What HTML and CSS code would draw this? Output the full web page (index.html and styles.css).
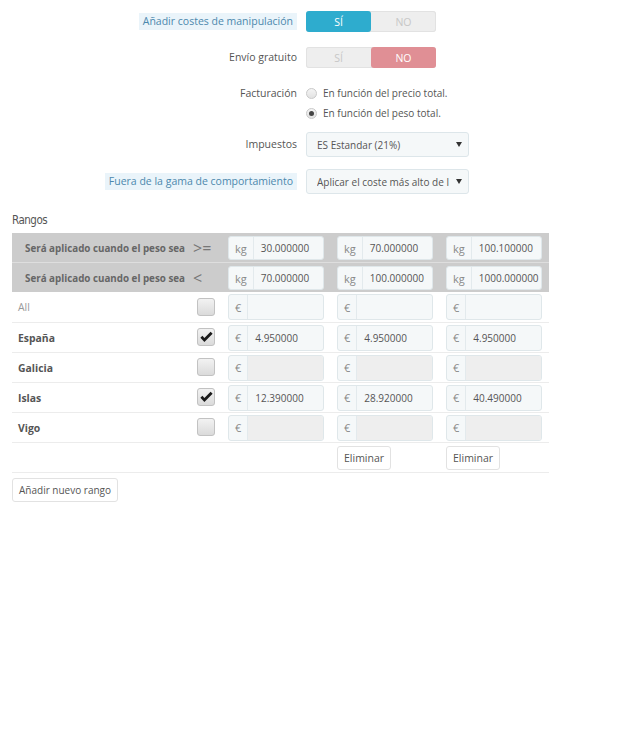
FILE: index.html
```html
<!DOCTYPE html>
<html lang="es">
<head>
<meta charset="utf-8">
<title>Rangos</title>
<link rel="stylesheet" href="styles.css">
</head>
<body>
<div class="form">
  <div class="row row-t1">
    <div class="lbl"><span class="tip">Añadir costes de manipulación</span></div>
    <div class="switch"><span class="opt yes-on">SÍ</span><span class="opt">NO</span></div>
  </div>
  <div class="row row-t2">
    <div class="lbl">Envío gratuito</div>
    <div class="switch"><span class="opt">SÍ</span><span class="opt no-on">NO</span></div>
  </div>
  <div class="row row-radio">
    <div class="lbl lbl-top">Facturación</div>
    <div class="radios">
      <label class="radio"><span class="dot"></span>En función del precio total.</label>
      <label class="radio"><span class="dot checked"></span>En función del peso total.</label>
    </div>
  </div>
  <div class="row row-s1">
    <div class="lbl">Impuestos</div>
    <div class="select"><span class="sel-text">ES Estandar (21%)</span><span class="caret"></span></div>
  </div>
  <div class="row row-s2">
    <div class="lbl"><span class="tip">Fuera de la gama de comportamiento</span></div>
    <div class="select"><span class="sel-text">Aplicar el coste más alto de la gama definida</span><span class="caret"></span></div>
  </div>
</div>

<h4 class="heading">Rangos</h4>

<table class="ranges">
  <colgroup>
    <col class="c-name"><col class="c-sign"><col class="c-range"><col class="c-range"><col class="c-range">
  </colgroup>
  <thead>
    <tr class="head head-1">
      <th class="h-text">Será aplicado cuando el peso sea</th>
      <th class="h-sign">&gt;=</th>
      <td><div class="ig"><span class="add">kg</span><span class="val">30.000000</span></div></td>
      <td><div class="ig"><span class="add">kg</span><span class="val">70.000000</span></div></td>
      <td><div class="ig"><span class="add">kg</span><span class="val">100.100000</span></div></td>
    </tr>
    <tr class="head">
      <th class="h-text">Será aplicado cuando el peso sea</th>
      <th class="h-sign">&lt;</th>
      <td><div class="ig"><span class="add">kg</span><span class="val">70.000000</span></div></td>
      <td><div class="ig"><span class="add">kg</span><span class="val">100.000000</span></div></td>
      <td><div class="ig"><span class="add">kg</span><span class="val">1000.000000</span></div></td>
    </tr>
  </thead>
  <tbody>
    <tr>
      <td class="name all">All</td>
      <td class="chk"><span class="box"></span></td>
      <td><div class="ig ig-b"><span class="add">€</span><span class="val"></span></div></td>
      <td><div class="ig ig-b"><span class="add">€</span><span class="val"></span></div></td>
      <td><div class="ig ig-b"><span class="add">€</span><span class="val"></span></div></td>
    </tr>
    <tr>
      <td class="name">España</td>
      <td class="chk"><span class="box"><svg viewBox="0 0 17 17" width="17" height="17"><path d="M2.4 8.8 L6.4 13 L14.6 4.8 L12.6 2.8 L6.4 9 L4.4 6.8 Z" fill="#1a1a1a"/></svg></span></td>
      <td><div class="ig ig-b"><span class="add">€</span><span class="val">4.950000</span></div></td>
      <td><div class="ig ig-b"><span class="add">€</span><span class="val">4.950000</span></div></td>
      <td><div class="ig ig-b"><span class="add">€</span><span class="val">4.950000</span></div></td>
    </tr>
    <tr>
      <td class="name">Galicia</td>
      <td class="chk"><span class="box"></span></td>
      <td><div class="ig ig-b dis"><span class="add">€</span><span class="val"></span></div></td>
      <td><div class="ig ig-b dis"><span class="add">€</span><span class="val"></span></div></td>
      <td><div class="ig ig-b dis"><span class="add">€</span><span class="val"></span></div></td>
    </tr>
    <tr>
      <td class="name">Islas</td>
      <td class="chk"><span class="box"><svg viewBox="0 0 17 17" width="17" height="17"><path d="M2.4 8.8 L6.4 13 L14.6 4.8 L12.6 2.8 L6.4 9 L4.4 6.8 Z" fill="#1a1a1a"/></svg></span></td>
      <td><div class="ig ig-b"><span class="add">€</span><span class="val">12.390000</span></div></td>
      <td><div class="ig ig-b"><span class="add">€</span><span class="val">28.920000</span></div></td>
      <td><div class="ig ig-b"><span class="add">€</span><span class="val">40.490000</span></div></td>
    </tr>
    <tr>
      <td class="name">Vigo</td>
      <td class="chk"><span class="box"></span></td>
      <td><div class="ig ig-b dis"><span class="add">€</span><span class="val"></span></div></td>
      <td><div class="ig ig-b dis"><span class="add">€</span><span class="val"></span></div></td>
      <td><div class="ig ig-b dis"><span class="add">€</span><span class="val"></span></div></td>
    </tr>
    <tr class="actions">
      <td></td>
      <td></td>
      <td></td>
      <td><button class="btn">Eliminar</button></td>
      <td><button class="btn">Eliminar</button></td>
    </tr>
  </tbody>
</table>

<button class="btn btn-add">Añadir nuevo rango</button>
</body>
</html>
```

FILE: styles.css
```css
* { box-sizing: border-box; }

body {
  margin: 0;
  background: #fff;
  font-family: "Open Sans", "Liberation Sans", sans-serif;
  font-size: 10.5px;
  color: #555;
}

.form {
  display: flex;
  flex-direction: column;
  padding-top: 11px;
}

.row {
  display: grid;
  grid-template-columns: 297px auto;
  column-gap: 9px;
  align-items: center;
  justify-items: start;
}

.lbl {
  justify-self: end;
  text-align: right;
  color: #555;
  font-size: 10.5px;
  line-height: 17px;
}

.lbl-top { align-self: start; line-height: 20px; }

.tip {
  display: inline-block;
  background: #eaf4fa;
  color: #4c88ad;
  padding: 0 4px;
  line-height: 17px;
}

.row-t2 { margin-top: 15px; }
.row-radio { margin-top: 15px; }
.row-s1 { margin-top: 9px; }
.row-s2 { margin-top: 12px; }

.switch {
  display: flex;
  width: 130px;
  height: 21px;
  border-radius: 3px;
  background: #eee;
  box-shadow: inset 0 0 0 1px #e2e2e2;
}

.opt {
  flex: 1;
  display: flex;
  align-items: center;
  justify-content: center;
  color: #c7c7c7;
  font-size: 10.5px;
  text-transform: uppercase;
  border-radius: 3px;
}

.yes-on { background: #2eacce; color: #fff; }
.no-on { background: #e08f95; color: #fff; }

.radios { display: flex; flex-direction: column; }

.radio {
  display: flex;
  align-items: center;
  height: 20px;
  font-size: 10px;
  color: #555;
}

.dot {
  width: 11px;
  height: 11px;
  border-radius: 50%;
  border: 1px solid #c9c9c9;
  background: linear-gradient(#f4f4f4, #e2e2e2);
  margin-right: 6px;
  display: flex;
  align-items: center;
  justify-content: center;
}

.dot.checked::after {
  content: "";
  width: 5px;
  height: 5px;
  border-radius: 50%;
  background: #444;
}

.select {
  display: flex;
  align-items: center;
  width: 163px;
  height: 25px;
  background: #f5f8f9;
  border: 1px solid #dde6ea;
  border-radius: 3px;
  padding: 0 6px 0 10px;
}

.sel-text {
  flex: 1;
  overflow: hidden;
  white-space: nowrap;
  color: #555;
  font-size: 10px;
  margin-right: 7px;
}

.caret {
  width: 0;
  height: 0;
  border-left: 3px solid transparent;
  border-right: 3px solid transparent;
  border-top: 5px solid #333;
}

.heading {
  margin: 0;
  margin-top: 16px;
  padding-left: 12px;
  font-family: "DejaVu Sans Condensed", "Roboto", sans-serif;
  font-weight: normal;
  font-size: 11.5px;
  letter-spacing: -0.5px;
  line-height: 20px;
  color: #555;
}

.ranges {
  margin: 3px 0 0 12px;
  border-collapse: collapse;
  table-layout: fixed;
  width: 537px;
}

.c-name { width: 178px; }
.c-sign { width: 32px; }
.c-range { width: 109px; }

.ranges td, .ranges th { padding: 0; }

.head th, .head td {
  background: #cccccc;
  padding: 3px 7px 2px 6px;
  height: 29px;
}

.head-1 th, .head-1 td { border-bottom: 1px solid #dedede; }

.h-text {
  text-align: left;
  padding-left: 13px !important;
  font-size: 9.8px;
  font-weight: bold;
  color: #666;
  white-space: nowrap;
}

.h-sign {
  text-align: left;
  padding-left: 3px !important;
  font-size: 16px;
  font-weight: normal;
  color: #777;
}

.ig {
  display: flex;
  width: 96px;
  height: 24px;
  border: 1px solid #dfe7ea;
  border-radius: 3px;
  background: #f5f8f9;
  overflow: hidden;
}

.ig-b { height: 26px; }

.add {
  display: flex;
  align-items: center;
  padding: 0 6px;
  color: #888;
  border-right: 1px solid #e3eaed;
  font-size: 11px;
}

.val {
  flex: 1;
  display: flex;
  align-items: center;
  padding-left: 7px;
  color: #555;
  font-size: 10px;
  white-space: nowrap;
}

.dis .val { background: #eeeeee; }

.ranges tbody td {
  padding: 2px 7px 1px 6px;
  border-bottom: 1px solid #ececec;
  height: 30px;
}

.ranges tbody td.name {
  padding-left: 6px;
  font-weight: bold;
  color: #555;
  font-size: 10.4px;
}

.ranges tbody td.all { font-weight: normal; color: #999; }

.ranges tbody td.chk { padding: 0 0 0 7px; }

.box {
  display: block;
  width: 18px;
  height: 18px;
  border: 1px solid #c2c2c2;
  border-radius: 3px;
  background: linear-gradient(#f2f2f2, #dadada);
  position: relative;
}

.box svg { position: absolute; left: 0; top: 0; }

.ranges tbody tr.actions td { padding-top: 3px; padding-bottom: 1px; }

.btn {
  font-family: "Open Sans", "Liberation Sans", sans-serif;
  font-size: 10.5px;
  color: #555;
  background: #fff;
  border: 1px solid #e2e2e2;
  border-radius: 3px;
  height: 24px;
  padding: 0 6px;
  cursor: pointer;
}

.btn-add {
  display: block;
  margin: 5px 0 0 12px;
  font-size: 10px;
}
```
